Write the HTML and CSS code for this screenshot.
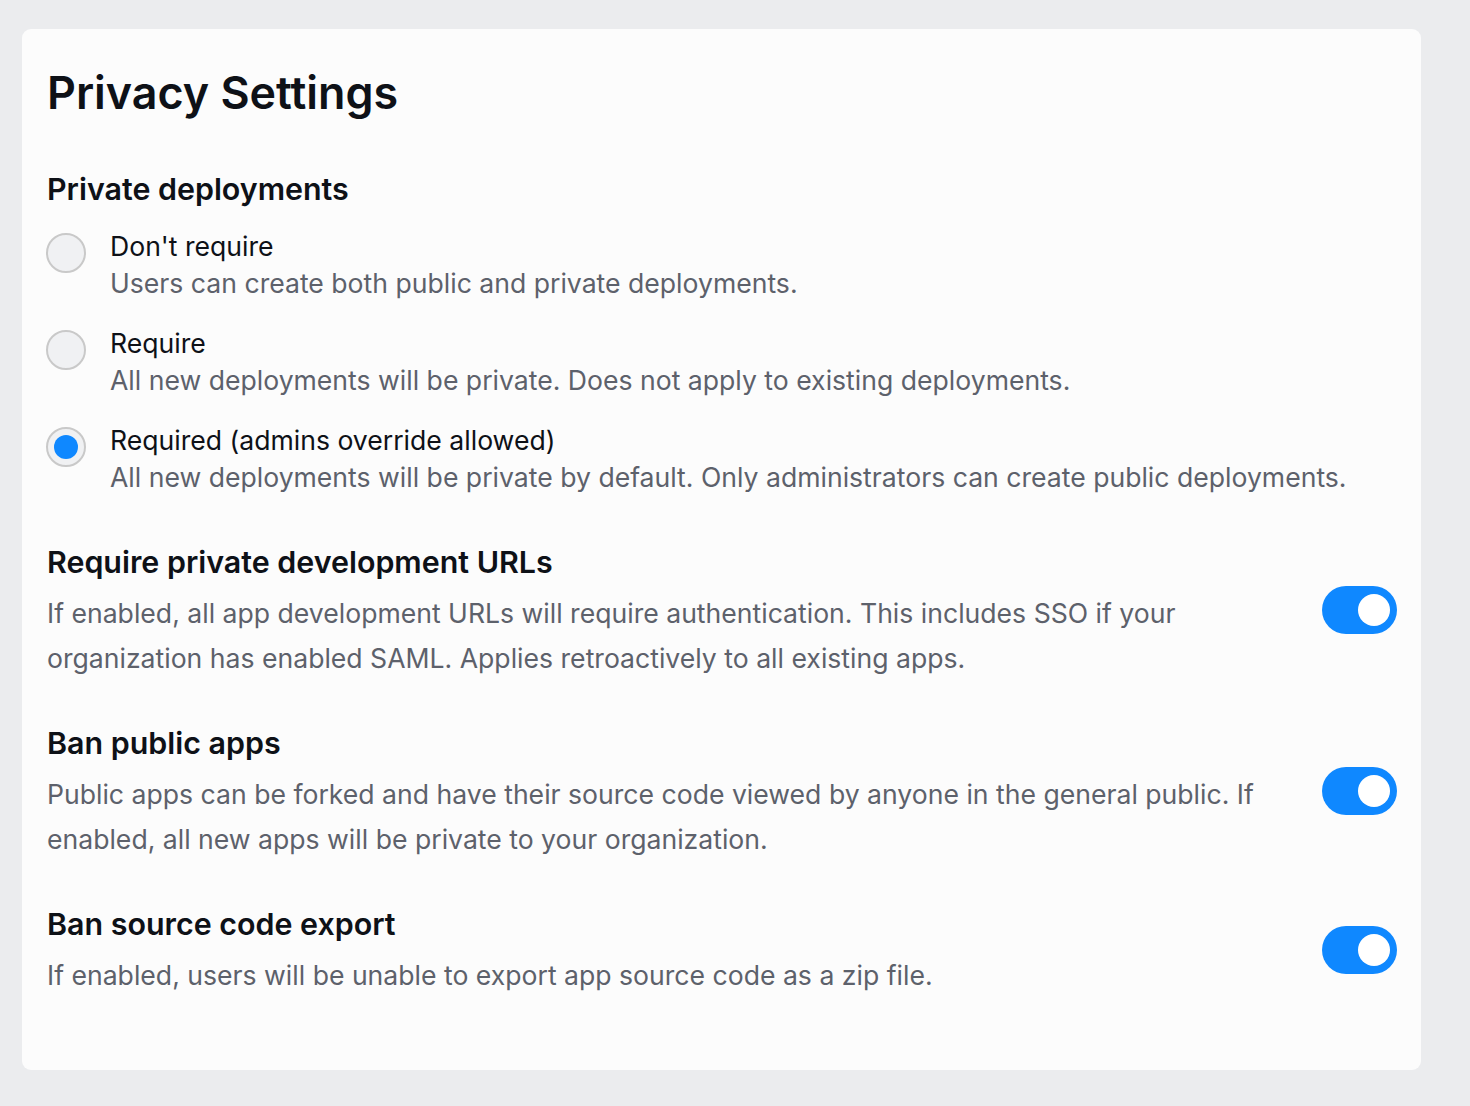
FILE: index.html
```html
<!DOCTYPE html>
<html lang="en">
<head>
    <meta charset="UTF-8">
    <meta name="viewport" content="width=device-width, initial-scale=1.0">
    <title>Privacy Settings</title>
    <link rel="stylesheet" href="styles.css">
</head>
<body>
    <div class="settings-card">
        <h1 class="settings-title">Privacy Settings</h1>

        <section class="setting-group">
            <h2 class="setting-heading">Private deployments</h2>

            <label class="radio-option">
                <span class="radio"></span>
                <span class="radio-text">
                    <span class="radio-label">Don't require</span>
                    <span class="radio-desc">Users can create both public and private deployments.</span>
                </span>
            </label>

            <label class="radio-option">
                <span class="radio"></span>
                <span class="radio-text">
                    <span class="radio-label">Require</span>
                    <span class="radio-desc">All new deployments will be private. Does not apply to existing deployments.</span>
                </span>
            </label>

            <label class="radio-option">
                <span class="radio checked"></span>
                <span class="radio-text">
                    <span class="radio-label">Required (admins override allowed)</span>
                    <span class="radio-desc">All new deployments will be private by default. Only administrators can create public deployments.</span>
                </span>
            </label>
        </section>

        <section class="toggle-row">
            <div class="toggle-text">
                <h2 class="setting-heading">Require private development URLs</h2>
                <p class="setting-desc">If enabled, all app development URLs will require authentication. This includes SSO if your organization has enabled SAML. Applies retroactively to all existing apps.</p>
            </div>
            <span class="toggle on"></span>
        </section>

        <section class="toggle-row">
            <div class="toggle-text">
                <h2 class="setting-heading">Ban public apps</h2>
                <p class="setting-desc">Public apps can be forked and have their source code viewed by anyone in the general public. If enabled, all new apps will be private to your organization.</p>
            </div>
            <span class="toggle on"></span>
        </section>

        <section class="toggle-row">
            <div class="toggle-text">
                <h2 class="setting-heading">Ban source code export</h2>
                <p class="setting-desc">If enabled, users will be unable to export app source code as a zip file.</p>
            </div>
            <span class="toggle on"></span>
        </section>
    </div>
</body>
</html>
```

FILE: styles.css
```css
* {
    margin: 0;
    padding: 0;
    box-sizing: border-box;
}

body {
    font-family: 'Inter', 'Noto Sans', sans-serif;
    background: #ebecee;
    padding: 29px 49px 36px 22px;
    color: #0e1117;
}

.settings-card {
    background: #fcfcfc;
    border-radius: 9px;
    padding: 34px 24px 50px 24px;
    min-height: 1041px;
}

.settings-title {
    font-size: 44.8px;
    font-weight: 600;
    line-height: 60px;
    margin-bottom: 46px;
    padding-left: 1px;
}

.setting-heading {
    font-size: 30.4px;
    font-weight: 600;
    line-height: 40px;
}

.setting-group {
    margin-bottom: 46px;
}

.setting-group .setting-heading {
    margin-bottom: 19px;
    padding-left: 1px;
}

.radio-option {
    display: flex;
    align-items: flex-start;
    gap: 24px;
    margin-bottom: 23px;
    cursor: pointer;
}

.radio-option:last-child {
    margin-bottom: 0;
}

.radio {
    flex: none;
    width: 40px;
    height: 40px;
    margin-top: 5px;
    border-radius: 50%;
    border: 2px solid #c9c9c9;
    background: #f0f1f3;
    display: flex;
    align-items: center;
    justify-content: center;
}

.radio.checked::after {
    content: '';
    width: 24px;
    height: 24px;
    border-radius: 50%;
    background: #0f88ff;
}

.radio-text {
    display: flex;
    flex-direction: column;
}

.radio-label {
    font-size: 26.6px;
    line-height: 37px;
}

.radio-desc,
.setting-desc {
    font-size: 26.6px;
    color: #5d616b;
}

.radio-desc {
    line-height: 37px;
}

.setting-desc {
    line-height: 45px;
    margin-top: 9px;
}

.toggle-row {
    display: flex;
    align-items: center;
    justify-content: space-between;
    gap: 60px;
    margin-bottom: 42px;
    padding-left: 1px;
}

.toggle-row:last-child {
    margin-bottom: 0;
}

.toggle-text {
    flex: 1;
    max-width: 1220px;
}

.toggle {
    flex: none;
    width: 75px;
    height: 48px;
    margin-top: -3px;
    border-radius: 24px;
    background: #c9ccd1;
    position: relative;
}

.toggle.on {
    background: #0f88ff;
}

.toggle::after {
    content: '';
    position: absolute;
    top: 8px;
    left: 8px;
    width: 32px;
    height: 32px;
    border-radius: 50%;
    background: white;
}

.toggle.on::after {
    left: 36px;
}
```
